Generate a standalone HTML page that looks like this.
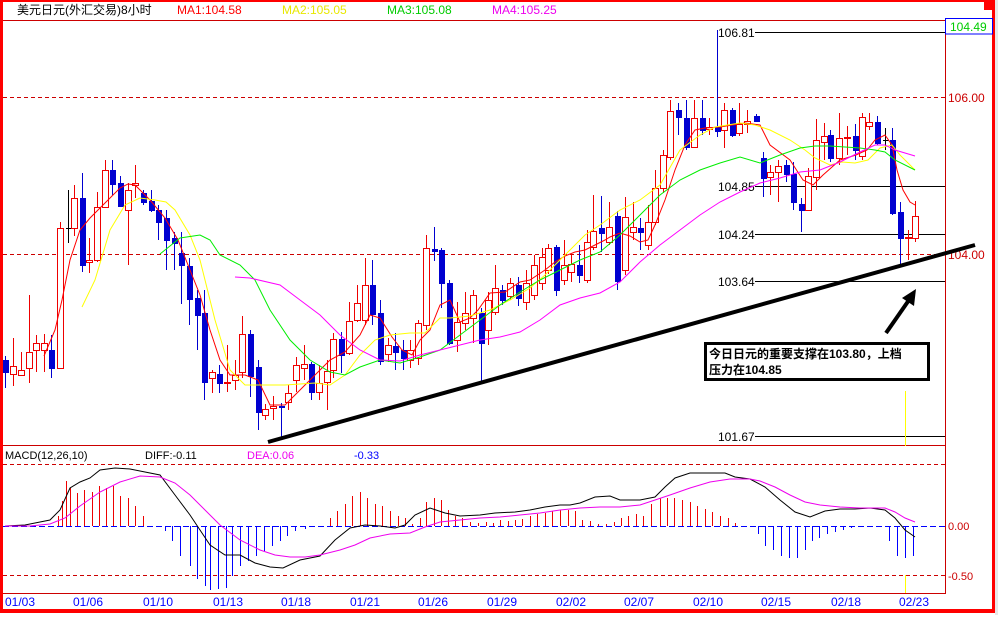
<!DOCTYPE html>
<html><head><meta charset="utf-8"><style>
html,body{margin:0;padding:0;background:#fff;}
body{width:998px;height:615px;overflow:hidden;}
svg text{font-family:"Liberation Sans","Noto Sans CJK SC",sans-serif;}
</style></head><body>
<svg id="s" width="998" height="615" xmlns="http://www.w3.org/2000/svg" shape-rendering="crispEdges">
<rect x="0" y="0" width="998" height="615" fill="#fff"/>
<rect x="995" y="0" width="3" height="615" fill="#e8e8e8"/>
<rect x="0" y="0" width="995" height="2" fill="#f00"/>
<rect x="0" y="0" width="3" height="612" fill="#f00"/>
<rect x="992" y="0" width="3" height="612" fill="#f00"/>
<rect x="0" y="609" width="995" height="4" fill="#f00"/>
<rect x="984" y="2" width="9" height="8" fill="#f00"/>
<line x1="3" y1="20.5" x2="992" y2="20.5" stroke="#c00"/>
<line x1="945.5" y1="20" x2="945.5" y2="594" stroke="#c00"/>
<line x1="3" y1="445.5" x2="945" y2="445.5" stroke="#c00"/>
<line x1="3" y1="593.5" x2="945" y2="593.5" stroke="#c00"/>
<rect x="945.5" y="18.5" width="47" height="15.5" fill="#fff" stroke="#00f"/>
<text x="950" y="31" font-size="12" fill="#0c0">104.49</text>
<text x="17" y="14" font-size="12" fill="#000">美元日元(外汇交易)8小时</text>
<text x="177" y="14" font-size="12" fill="#f00">MA1:104.58</text>
<text x="282" y="14" font-size="12" fill="#e8e800">MA2:105.05</text>
<text x="387" y="14" font-size="12" fill="#0c0">MA3:105.08</text>
<text x="492" y="14" font-size="12" fill="#e0e">MA4:105.25</text>
<line x1="3" y1="97.5" x2="945" y2="97.5" stroke="#c00" stroke-dasharray="4,3"/>
<line x1="3" y1="254.5" x2="945" y2="254.5" stroke="#c00" stroke-dasharray="4,3"/>
<text x="948" y="102" font-size="12" fill="#c00">106.00</text>
<text x="948" y="259" font-size="12" fill="#c00">104.00</text>
<g font-size="12" fill="#000">
<text x="718" y="37">106.81</text><line x1="755" y1="32.5" x2="945" y2="32.5" stroke="#000"/>
<text x="718" y="191">104.85</text><line x1="755" y1="186.5" x2="945" y2="186.5" stroke="#000"/>
<text x="718" y="239">104.24</text><line x1="755" y1="234.5" x2="945" y2="234.5" stroke="#000"/>
<text x="718" y="286">103.64</text><line x1="755" y1="281.5" x2="945" y2="281.5" stroke="#000"/>
<text x="718" y="441">101.67</text><line x1="755" y1="436.5" x2="945" y2="436.5" stroke="#000"/>
</g>
<rect x="905" y="391" width="1" height="55" fill="#ff0"/>
<rect x="905" y="575" width="1" height="18" fill="#ff0"/>
<g id="cd"></g>
<g id="ma" fill="none" shape-rendering="auto"></g>
<line x1="268" y1="442" x2="975" y2="245" stroke="#000" stroke-width="4" shape-rendering="auto"/>
<g shape-rendering="auto"><line x1="886" y1="333" x2="909" y2="300" stroke="#000" stroke-width="4"/>
<polygon points="916,289 914,306 902,298" fill="#000"/></g>
<rect x="705.5" y="343.5" width="223" height="36" fill="#fff" stroke="#000" stroke-width="3"/>
<text x="709" y="358" font-size="12" font-weight="bold" fill="#000">今日日元的重要支撑在103.80，上档</text>
<text x="709" y="374" font-size="12" font-weight="bold" fill="#000">压力在104.85</text>
<text x="5" y="459" font-size="11" fill="#000">MACD(12,26,10)</text>
<text x="145" y="459" font-size="11" fill="#000">DIFF:-0.11</text>
<text x="247" y="459" font-size="11" fill="#e0e">DEA:0.06</text>
<text x="354" y="459" font-size="11" fill="#00f">-0.33</text>
<line x1="3" y1="464.5" x2="945" y2="464.5" stroke="#c00" stroke-dasharray="4,3"/>
<line x1="3" y1="575.5" x2="945" y2="575.5" stroke="#c00" stroke-dasharray="4,3"/>
<line x1="3" y1="526.5" x2="945" y2="526.5" stroke="#00f" stroke-dasharray="6,3"/>
<text x="948" y="530" font-size="11" fill="#c00">0.00</text>
<text x="948" y="580" font-size="11" fill="#c00">-0.50</text>
<g id="hist"></g>
<g id="macd" fill="none" shape-rendering="auto"></g>
<g id="dates" font-size="12" fill="#00f"></g>
</svg>
<script>
var NS="http://www.w3.org/2000/svg";
function el(p,t,a){var e=document.createElementNS(NS,t);for(var k in a)e.setAttribute(k,a[k]);p.appendChild(e);return e;}
var D="5,360,372,b,356,388;13,366,374,r,338,386;21,370,375,r,352,376;29,352,368,r,295,383;36,343,350,r,335,372;44,343,350,r,334,372;51,350,368,b,335,378;60,228,368,r,222,368;68,228,229,k,190,243;74,198,228,r,185,236;82,198,265,b,173,272;89,260,262,r,238,273;97,207,260,r,192,262;105,170,207,r,160,208;112,170,184,b,160,195;120,183,206,b,176,207;128,190,210,r,183,265;135,183,185,r,165,198;143,193,202,b,190,205;151,201,210,b,190,212;158,210,222,b,205,240;166,218,240,b,210,270;174,238,243,b,232,270;181,253,265,b,232,304;189,266,299,b,258,325;197,298,315,b,290,350;204,313,382,b,290,400;212,372,378,r,370,393;219,374,383,b,365,393;227,382,383,r,345,392;235,375,380,r,360,390;242,334,372,r,316,378;250,334,376,b,330,397;258,367,412,b,360,430;265,409,415,r,404,420;273,406,408,r,396,420;281,406,407,b,403,440;288,393,402,r,385,410;296,365,380,r,357,392;304,364,368,r,345,380;311,364,392,b,362,400;319,383,392,r,365,400;327,371,382,r,360,410;333,339,370,r,333,378;341,339,355,b,332,373;349,321,353,r,302,355;357,303,320,r,285,322;365,285,320,r,258,325;372,285,314,b,260,325;380,313,361,b,300,365;388,345,354,r,338,362;395,346,352,b,333,370;403,350,358,b,340,370;410,350,360,r,340,368;418,323,358,r,320,365;426,248,325,r,235,330;434,249,251,b,227,261;441,250,283,b,248,308;449,283,343,b,280,345;457,322,340,r,302,352;465,313,323,r,292,330;473,295,318,r,290,343;481,313,343,b,308,383;488,300,330,r,292,345;495,288,312,r,265,315;502,290,300,b,285,305;510,283,296,r,278,300;518,285,298,b,277,306;526,283,302,r,270,310;534,265,295,r,255,300;542,257,283,r,248,290;548,248,270,r,244,274;556,247,290,b,245,296;564,265,280,r,240,285;571,264,272,r,255,282;579,265,275,b,245,283;587,242,280,r,230,283;593,231,247,r,195,250;601,228,233,b,196,252;609,227,242,r,202,245;617,216,281,b,211,290;625,217,270,r,197,275;633,227,232,r,202,240;640,228,232,b,218,250;648,222,245,r,205,250;655,188,222,r,170,225;663,155,188,r,150,193;670,111,157,r,100,160;678,110,117,b,103,135;686,118,147,b,100,150;694,118,147,r,100,148;702,118,130,b,100,135;709,127,129,r,118,135;717,127,131,b,30,137;724,110,130,r,103,148;732,110,135,b,108,137;739,124,133,r,103,136;747,121,124,r,110,133;756,116,121,b,114,122;763,158,178,b,152,197;770,172,177,r,165,195;778,166,172,r,160,202;786,165,174,b,160,182;793,174,202,b,162,210;801,204,210,b,198,232;808,176,210,r,168,210;816,140,177,r,119,190;824,136,142,r,123,160;830,135,158,b,130,162;839,138,158,r,113,165;847,137,138,r,126,155;855,136,150,b,124,160;862,117,156,r,113,160;869,122,126,r,113,130;877,122,143,b,116,145;885,140,141,k,128,150;892,140,213,b,128,215;900,212,238,b,202,265;908,237,238,r,230,260;915,216,238,r,201,242";
var cd=document.getElementById("cd");
D.split(";").forEach(function(s){var a=s.split(",");var x=+a[0],t=+a[1],b=+a[2],c=a[3],h=+a[4],l=+a[5];
var col=c=="r"?"#e00":(c=="b"?"#0000d0":"#000");
el(cd,"line",{x1:x+.5,y1:h,x2:x+.5,y2:l,stroke:col});
if(c=="r")el(cd,"rect",{x:x-2.5,y:t+.5,width:6,height:Math.max(1,b-t),fill:"#fff",stroke:col});
else if(c=="b")el(cd,"rect",{x:x-2,y:t,width:6,height:Math.max(2,b-t+1),fill:col});
else el(cd,"line",{x1:x-2,y1:t+.5,x2:x+4,y2:t+.5,stroke:col});});
function pl(g,pts,col){el(g,"polyline",{points:pts,stroke:col,"stroke-width":1});}
var ma=document.getElementById("ma");
pl(ma,"44,356 55,330 62,300 70,260 80,230 90,218 100,208 110,198 120,188 128,184 135,185 150,200 165,218 178,240 190,270 200,295 210,330 220,360 230,375 245,375 258,380 270,405 285,405 300,390 315,375 330,360 345,352 360,335 370,315 380,318 392,337 402,350 412,355 420,340 430,330 440,305 450,300 460,322 470,318 478,310 490,293 505,292 520,282 530,280 545,270 555,262 565,256 575,252 585,250 595,245 605,240 610,237 620,233 630,236 640,242 648,240 655,225 665,200 675,170 685,145 695,130 705,128 720,127 745,123 760,125 770,145 790,160 803,180 813,185 823,175 840,160 856,155 867,150 875,140 885,135 892,145 897,170 903,190 910,202 915,205","#f00");
pl(ma,"82,307 95,280 110,230 125,205 140,198 155,200 166,202 175,210 190,235 200,260 215,320 230,370 245,385 270,385 285,385 300,384 315,383 330,385 345,375 360,355 375,340 390,335 410,333 425,333 440,318 450,318 470,316 490,310 510,300 530,288 545,275 565,255 585,235 600,225 620,210 640,200 660,185 680,150 700,135 715,127 740,123 755,125 770,130 790,140 805,150 815,158 830,165 842,162 855,163 868,160 880,148 892,145 900,155 915,170","#ff0");
pl(ma,"160,254 180,238 200,235 210,240 220,255 240,265 255,280 270,310 290,340 310,360 330,372 345,375 360,367 380,360 400,363 420,357 440,350 460,335 480,320 500,305 520,292 540,280 560,270 580,260 600,252 620,235 640,215 660,195 680,180 700,170 720,163 740,157 760,163 780,155 800,148 815,146 830,146 845,147 860,148 875,150 885,152 895,160 915,170","#0e0");
pl(ma,"235,277 250,278 280,285 300,300 320,315 340,335 360,350 380,360 400,361 420,355 440,350 460,345 480,340 500,337 520,332 540,320 560,305 580,298 600,293 620,282 640,262 660,245 680,230 700,215 720,202 740,192 760,183 780,178 800,172 820,170 840,162 860,152 875,145 885,145 895,150 915,156","#f0f");
var H="58:10,62:25,66:45,70:38,77:33,84:36,92:34,99:40,106:38,113:40,120:30,128:28,135:20,143:10,165:-5,172:-15,180:-30,190:-40,197:-53,205:-60,210:-64,218:-63,226:-62,232:-50,240:-40,248:-35,256:-30,264:-25,272:-20,280:-15,287:-10,295:-5,305:-3,330:8,337:15,345:22,352:30,360:34,367:28,375:22,382:20,390:15,398:10,405:8,412:2,420:8,426:24,434:28,441:26,448:16,455:10,462:8,470:4,478:3,486:4,493:3,500:6,508:5,515:6,522:7,530:10,537:12,545:13,552:15,560:16,568:16,575:15,582:6,590:5,598:2,606:2,614:4,621:8,628:10,636:12,643:10,651:22,660:28,667:28,674:28,682:26,690:24,697:20,705:17,712:14,720:10,728:8,735:3,758:-8,765:-20,773:-24,781:-30,789:-32,797:-32,805:-24,812:-15,819:-12,827:-8,835:-6,843:-4,851:-2,889:-15,897:-30,905:-32,913:-30";
var hg=document.getElementById("hist");
H.split(",").forEach(function(s){var a=s.split(":");var x=+a[0]+.5,v=+a[1];
el(hg,"line",{x1:x,y1:526,x2:x,y2:526-v,stroke:v>0?"#e00":"#00f"});});
var mg=document.getElementById("macd");
pl(mg,"5,526 25,525 40,522 50,520 60,510 70,488 80,482 90,478 100,470 115,468 130,469 145,472 160,475 175,495 190,515 200,530 210,545 225,555 240,555 255,563 270,567 283,568 300,560 320,556 335,540 350,528 365,525 380,526 395,528 405,525 415,515 430,508 445,513 460,516 480,515 495,513 515,512 530,510 545,507 560,505 570,505 580,503 595,497 610,496 620,500 640,500 655,497 665,487 675,478 690,473 710,473 725,473 735,477 750,479 765,487 780,500 795,512 810,517 825,511 840,509 855,509 870,508 885,510 895,518 905,530 915,537","#000");
pl(mg,"5,526 30,526 50,524 65,518 80,506 100,492 120,482 140,476 160,477 175,483 190,495 205,510 220,525 240,540 260,550 275,555 290,557 305,557 320,555 340,550 355,545 370,538 390,534 410,533 425,527 440,522 460,520 480,518 500,517 520,515 540,513 560,510 580,508 600,507 620,507 640,505 655,500 670,495 690,488 710,482 730,479 750,479 760,481 775,487 790,495 805,502 820,505 840,507 860,508 875,508 885,508 895,512 905,518 915,522","#e0e");
var dg=document.getElementById("dates");
[["01/03",5],["01/06",73],["01/10",143],["01/13",213],["01/18",281],["01/21",350],["01/26",418],["01/29",487],["02/02",556],["02/07",624],["02/10",693],["02/15",761],["02/18",831],["02/23",899]].forEach(function(d){var t=el(dg,"text",{x:d[1],y:606});t.textContent=d[0];});
</script>
</body></html>
